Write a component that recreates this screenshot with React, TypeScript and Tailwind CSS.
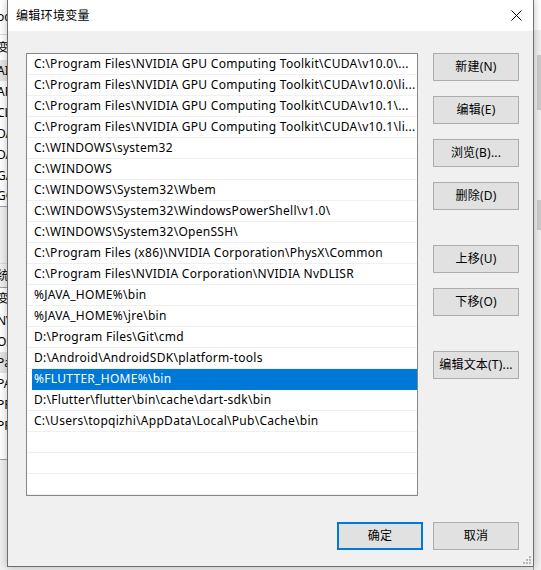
import React from 'react';

const paths = [
  'C:\\Program Files\\NVIDIA GPU Computing Toolkit\\CUDA\\v10.0\\...',
  'C:\\Program Files\\NVIDIA GPU Computing Toolkit\\CUDA\\v10.0\\li...',
  'C:\\Program Files\\NVIDIA GPU Computing Toolkit\\CUDA\\v10.1\\...',
  'C:\\Program Files\\NVIDIA GPU Computing Toolkit\\CUDA\\v10.1\\li...',
  'C:\\WINDOWS\\system32',
  'C:\\WINDOWS',
  'C:\\WINDOWS\\System32\\Wbem',
  'C:\\WINDOWS\\System32\\WindowsPowerShell\\v1.0\\',
  'C:\\WINDOWS\\System32\\OpenSSH\\',
  'C:\\Program Files (x86)\\NVIDIA Corporation\\PhysX\\Common',
  'C:\\Program Files\\NVIDIA Corporation\\NVIDIA NvDLISR',
  '%JAVA_HOME%\\bin',
  '%JAVA_HOME%\\jre\\bin',
  'D:\\Program Files\\Git\\cmd',
  'D:\\Android\\AndroidSDK\\platform-tools',
  '%FLUTTER_HOME%\\bin',
  'D:\\Flutter\\flutter\\bin\\cache\\dart-sdk\\bin',
  'C:\\Users\\topqizhi\\AppData\\Local\\Pub\\Cache\\bin',
  '',
  '',
  '',
];

const SELECTED = 15;

// fragments of the window behind the dialog, left edge
const behind = [
  { t: 'oc', y: 'h-[35px]', cls: 'bg-white border-b border-[#d9d9d9]' },
  { t: '变', y: 'h-[25px]', cls: 'bg-white' },
  { t: 'AI', y: 'h-[21px]', cls: 'bg-[#e5e5e5]' },
  { t: 'AF', y: 'h-[21px]', cls: 'bg-white' },
  { t: 'CL', y: 'h-[21px]', cls: 'bg-white' },
  { t: 'DA', y: 'h-[21px]', cls: 'bg-white' },
  { t: 'DA', y: 'h-[21px]', cls: 'bg-white' },
  { t: 'GA', y: 'h-[21px]', cls: 'bg-white' },
  { t: 'GO', y: 'h-[21px]', cls: 'bg-white border-b border-[#a0a0a0]' },
  { t: '', y: 'h-[57px]', cls: 'bg-[#f0f0f0] border-b border-[#d9d9d9]' },
  { t: '统', y: 'h-[24px]', cls: 'bg-[#f0f0f0] border-b border-[#a0a0a0]' },
  { t: '变', y: 'h-[22px]', cls: 'bg-white' },
  { t: 'NV', y: 'h-[21px]', cls: 'bg-white' },
  { t: 'OS', y: 'h-[21px]', cls: 'bg-white' },
  { t: 'Pa', y: 'h-[21px]', cls: 'bg-[#e5e5e5]' },
  { t: 'PA', y: 'h-[21px]', cls: 'bg-white' },
  { t: 'PR', y: 'h-[21px]', cls: 'bg-white' },
  { t: 'PF', y: 'h-[21px]', cls: 'bg-white' },
  { t: '', y: 'h-[24px]', cls: 'bg-white border-b border-[#a0a0a0]' },
];

const Btn = ({ label, primary = false }: { label: string; primary?: boolean }) => (
  <button
    className={
      'w-[86px] h-[28px] bg-[#e1e1e1] text-[12px] text-black flex items-center justify-center tracking-[0.2px] ' +
      (primary ? 'border-2 border-[#0078d7]' : 'border border-[#adadad]')
    }
  >
    {label}
  </button>
);

export default function App() {
  return (
    <div
      className="relative w-[541px] h-[570px] overflow-hidden bg-[#f0f0f0]"
      style={{ fontFamily: '"Noto Sans", "Noto Sans CJK SC", sans-serif' }}
    >
      {/* window behind, left */}
      <div className="flex flex-col w-[20px] text-[12px] leading-none text-black">
        {behind.map((b, i) => (
          <div key={i} className={'flex items-center overflow-hidden whitespace-nowrap ' + b.y + ' ' + b.cls}>
            <span className="-ml-[3px]">{b.t}</span>
          </div>
        ))}
      </div>

      {/* window behind, right edge scrollbar */}
      <div className="absolute right-0 top-0 w-[8px] h-full bg-[#f0f0f0] border-l border-[#a0a0a0]">
        <div className="h-[30px] bg-white" />
        <div className="ml-[3px] mt-[25px] w-[4px] h-[55px] bg-[#cdcdcd]" />
        <div className="ml-[3px] mt-[90px] w-[4px] h-[30px] bg-[#cdcdcd]" />
      </div>

      {/* dialog */}
      <div className="absolute left-[7px] top-0 w-[527px] h-[567px] border border-t-0 border-[#6f6f6f] bg-[#f0f0f0] flex flex-col shadow-[0_0_8px_rgba(0,0,0,0.25)]">
        {/* title bar */}
        <div className="h-[31px] bg-white flex items-center justify-between pl-[8px] pr-[10px]">
          <span className="text-[12px] text-black tracking-[0.3px]">编辑环境变量</span>
          <svg width="11" height="11" viewBox="0 0 11 11" className="mr-[1px]">
            <path d="M0.5 0.5 L10.5 10.5 M10.5 0.5 L0.5 10.5" stroke="#000" strokeWidth="1" />
          </svg>
        </div>

        {/* body */}
        <div className="flex-1 flex flex-col pl-[18px] pr-[14px] pt-[22px] pb-[16px]">
          <div className="flex gap-[15px]">
            {/* list */}
            <div className="w-[392px] h-[443px] bg-white border border-[#828790] overflow-hidden">
              {paths.map((p, i) => (
                <div
                  key={i}
                  className={
                    'h-[21px] border-b whitespace-nowrap overflow-hidden text-[12px] leading-[20px] tracking-[0.28px] ' +
                    (i === SELECTED
                      ? 'bg-[#0078d7] text-white border-[#0078d7] ml-[5px] pl-[2px]'
                      : 'text-black border-[#f0f0f0] pl-[7px]')
                  }
                >
                  {p}
                </div>
              ))}
            </div>

            {/* side buttons */}
            <div className="flex flex-col gap-[15px]">
              <Btn label="新建(N)" />
              <Btn label="编辑(E)" />
              <Btn label="浏览(B)..." />
              <Btn label="删除(D)" />
              <div className="h-[5px]" />
              <Btn label="上移(U)" />
              <Btn label="下移(O)" />
              <div className="h-[5px]" />
              <Btn label="编辑文本(T)..." />
            </div>
          </div>

          <div className="flex-1" />
          <div className="flex justify-end gap-[10px]">
            <Btn label="确定" primary />
            <Btn label="取消" />
          </div>
        </div>

        {/* resize grip */}
        <svg width="8" height="8" viewBox="0 0 8 8" className="absolute right-[2px] bottom-[2px]">
          <rect x="6" y="0" width="2" height="2" fill="#b8b8b8" />
          <rect x="3" y="3" width="2" height="2" fill="#b8b8b8" />
          <rect x="6" y="3" width="2" height="2" fill="#b8b8b8" />
          <rect x="0" y="6" width="2" height="2" fill="#b8b8b8" />
          <rect x="3" y="6" width="2" height="2" fill="#b8b8b8" />
          <rect x="6" y="6" width="2" height="2" fill="#b8b8b8" />
        </svg>
      </div>
    </div>
  );
}
